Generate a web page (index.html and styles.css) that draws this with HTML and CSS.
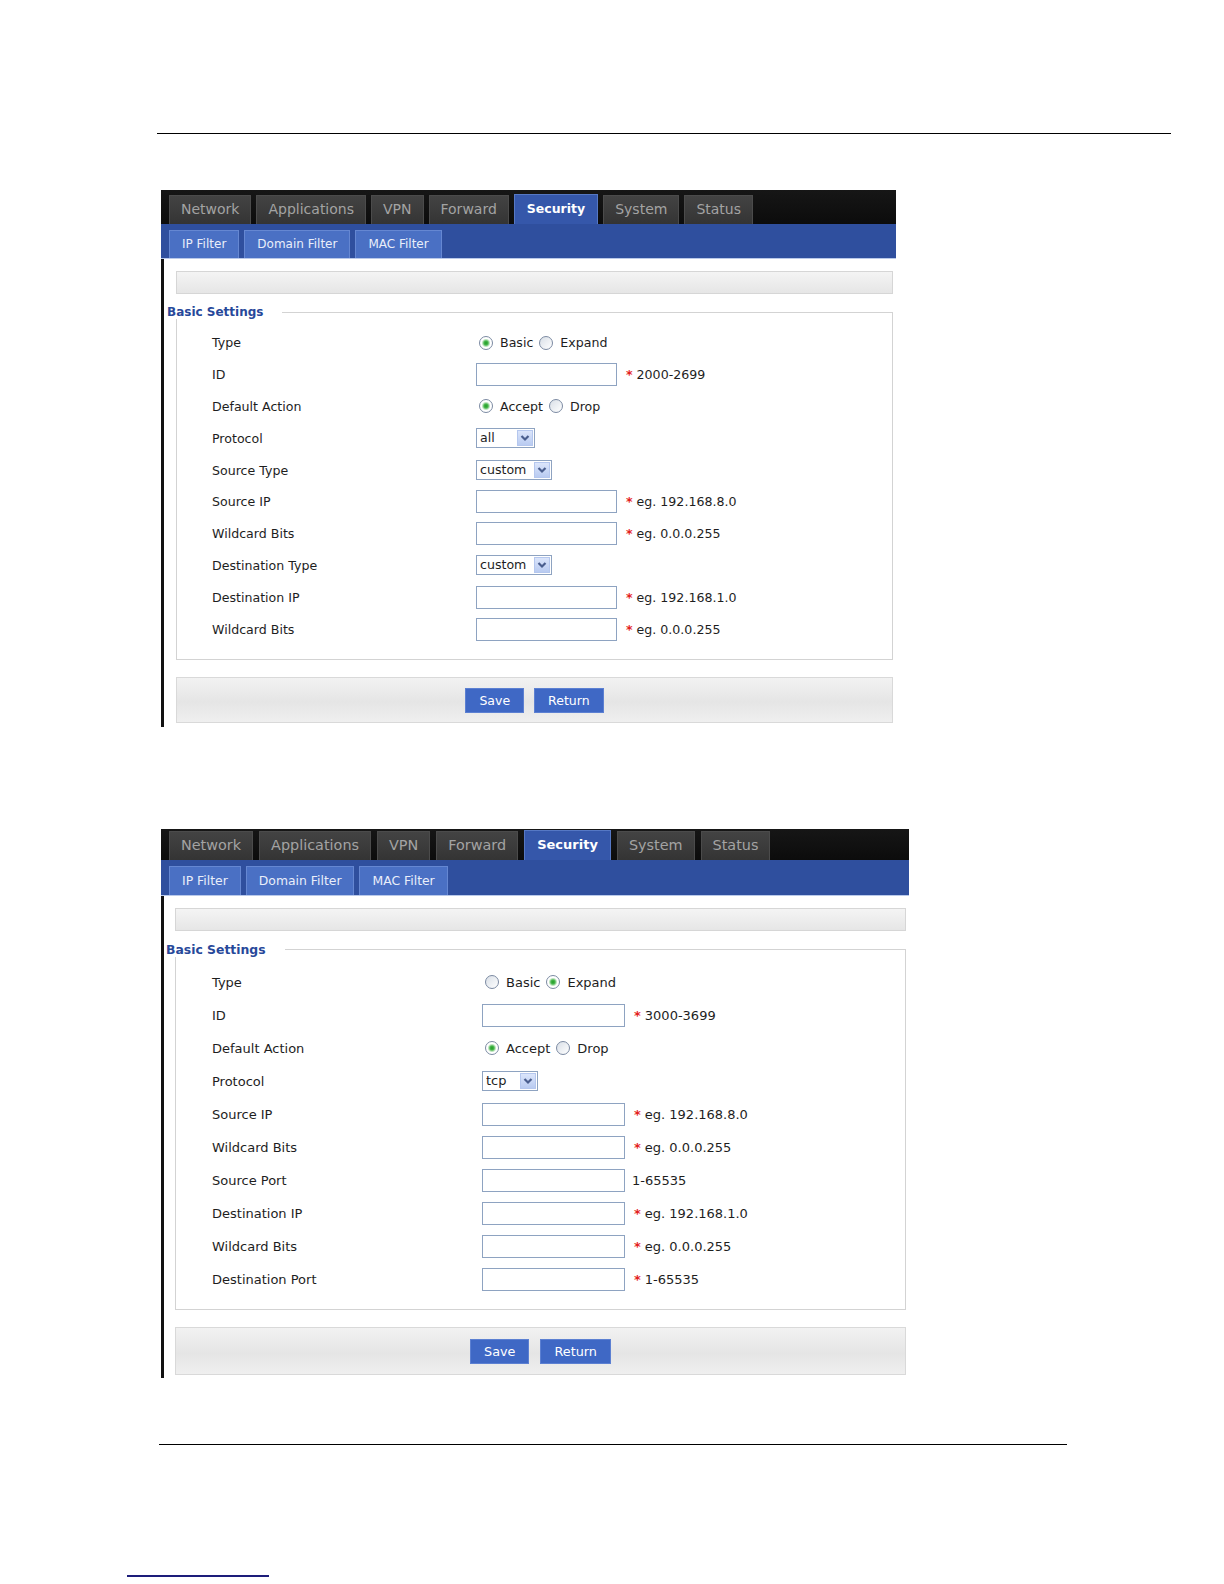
FILE: index.html
```html
<!DOCTYPE html>
<html lang="en">
<head>
<meta charset="UTF-8">
<meta name="viewport" content="width=device-width, initial-scale=1.0">
<title>Security - IP Filter</title>
<link rel="stylesheet" href="styles.css">
</head>
<body>
<div class="page">

  <div class="rule rule-top"></div>

  <!-- IP filter, basic type -->
  <div class="shot shot-basic">
    <div class="topnav">
      <a class="tab" href="#">Network</a>
      <a class="tab" href="#">Applications</a>
      <a class="tab" href="#">VPN</a>
      <a class="tab" href="#">Forward</a>
      <a class="tab active" href="#">Security</a>
      <a class="tab" href="#">System</a>
      <a class="tab" href="#">Status</a>
    </div>
    <div class="subnav">
      <a class="subtab" href="#">IP Filter</a>
      <a class="subtab" href="#">Domain Filter</a>
      <a class="subtab" href="#">MAC Filter</a>
    </div>
    <div class="content">
      <div class="infobar"></div>
      <fieldset class="settings">
        <legend>Basic Settings</legend>
        <div class="form-grid">
          <span class="label">Type</span>
          <span class="field">
            <label class="opt"><input type="radio" name="type1" checked>Basic</label>
            <label class="opt"><input type="radio" name="type1">Expand</label>
          </span>

          <span class="label">ID</span>
          <span class="field"><input class="text" type="text"><span class="req">*</span>2000-2699</span>

          <span class="label">Default Action</span>
          <span class="field">
            <label class="opt"><input type="radio" name="act1" checked>Accept</label>
            <label class="opt"><input type="radio" name="act1">Drop</label>
          </span>

          <span class="label">Protocol</span>
          <span class="field">
            <span class="select">
              <select class="sel-short"><option>all</option><option>tcp</option><option>udp</option><option>icmp</option></select>
              <span class="arrow"><svg width="16" height="16" viewBox="0 0 16 16"><path d="M4.5 6 L8 9.5 L11.5 6" fill="none" stroke="#4a5e8e" stroke-width="2.2"/></svg></span>
            </span>
          </span>

          <span class="label">Source Type</span>
          <span class="field">
            <span class="select">
              <select class="sel-long"><option>custom</option><option>any</option></select>
              <span class="arrow"><svg width="16" height="16" viewBox="0 0 16 16"><path d="M4.5 6 L8 9.5 L11.5 6" fill="none" stroke="#4a5e8e" stroke-width="2.2"/></svg></span>
            </span>
          </span>

          <span class="label">Source IP</span>
          <span class="field"><input class="text" type="text"><span class="req">*</span>eg. 192.168.8.0</span>

          <span class="label">Wildcard Bits</span>
          <span class="field"><input class="text" type="text"><span class="req">*</span>eg. 0.0.0.255</span>

          <span class="label">Destination Type</span>
          <span class="field">
            <span class="select">
              <select class="sel-long"><option>custom</option><option>any</option></select>
              <span class="arrow"><svg width="16" height="16" viewBox="0 0 16 16"><path d="M4.5 6 L8 9.5 L11.5 6" fill="none" stroke="#4a5e8e" stroke-width="2.2"/></svg></span>
            </span>
          </span>

          <span class="label">Destination IP</span>
          <span class="field"><input class="text" type="text"><span class="req">*</span>eg. 192.168.1.0</span>

          <span class="label">Wildcard Bits</span>
          <span class="field"><input class="text" type="text"><span class="req">*</span>eg. 0.0.0.255</span>
        </div>
      </fieldset>
      <div class="actions">
        <button class="btn" type="button">Save</button>
        <button class="btn" type="button">Return</button>
      </div>
    </div>
  </div>

  <!-- IP filter, expand type -->
  <div class="shot shot-expand">
    <div class="topnav">
      <a class="tab" href="#">Network</a>
      <a class="tab" href="#">Applications</a>
      <a class="tab" href="#">VPN</a>
      <a class="tab" href="#">Forward</a>
      <a class="tab active" href="#">Security</a>
      <a class="tab" href="#">System</a>
      <a class="tab" href="#">Status</a>
    </div>
    <div class="subnav">
      <a class="subtab" href="#">IP Filter</a>
      <a class="subtab" href="#">Domain Filter</a>
      <a class="subtab" href="#">MAC Filter</a>
    </div>
    <div class="content">
      <div class="infobar"></div>
      <fieldset class="settings">
        <legend>Basic Settings</legend>
        <div class="form-grid">
          <span class="label">Type</span>
          <span class="field">
            <label class="opt"><input type="radio" name="type2">Basic</label>
            <label class="opt"><input type="radio" name="type2" checked>Expand</label>
          </span>

          <span class="label">ID</span>
          <span class="field"><input class="text" type="text"><span class="req">*</span>3000-3699</span>

          <span class="label">Default Action</span>
          <span class="field">
            <label class="opt"><input type="radio" name="act2" checked>Accept</label>
            <label class="opt"><input type="radio" name="act2">Drop</label>
          </span>

          <span class="label">Protocol</span>
          <span class="field">
            <span class="select">
              <select class="sel-short"><option>tcp</option><option>udp</option><option>all</option></select>
              <span class="arrow"><svg width="16" height="16" viewBox="0 0 16 16"><path d="M4.5 6 L8 9.5 L11.5 6" fill="none" stroke="#4a5e8e" stroke-width="2.2"/></svg></span>
            </span>
          </span>

          <span class="label">Source IP</span>
          <span class="field"><input class="text" type="text"><span class="req">*</span>eg. 192.168.8.0</span>

          <span class="label">Wildcard Bits</span>
          <span class="field"><input class="text" type="text"><span class="req">*</span>eg. 0.0.0.255</span>

          <span class="label">Source Port</span>
          <span class="field"><input class="text" type="text"><span class="hint">1-65535</span></span>

          <span class="label">Destination IP</span>
          <span class="field"><input class="text" type="text"><span class="req">*</span>eg. 192.168.1.0</span>

          <span class="label">Wildcard Bits</span>
          <span class="field"><input class="text" type="text"><span class="req">*</span>eg. 0.0.0.255</span>

          <span class="label">Destination Port</span>
          <span class="field"><input class="text" type="text"><span class="req">*</span>1-65535</span>
        </div>
      </fieldset>
      <div class="actions">
        <button class="btn" type="button">Save</button>
        <button class="btn" type="button">Return</button>
      </div>
    </div>
  </div>

  <div class="rule rule-bottom"></div>
  <div class="footnote-line"></div>

</div>
</body>
</html>
```

FILE: styles.css
```css
* {
  box-sizing: border-box;
}

body {
  margin: 0;
  background: #fff;
  color: #1e1e1e;
  font-family: "DejaVu Sans", Verdana, sans-serif;
}

.page {
  width: 1224px;
  padding-top: 133px;
  padding-bottom: 8px;
}

.rule {
  border-top: 1px solid #000;
}

.rule-top {
  margin-left: 157px;
  width: 1014px;
}

.rule-bottom {
  margin: 66px 0 0 159px;
  width: 908px;
}

.footnote-line {
  margin: 130px 0 0 127px;
  width: 142px;
  border-top: 2px solid #1d1d7a;
}

.shot {
  margin-left: 161px;
}

.shot-basic {
  width: 735px;
  margin-top: 56px;
}

.shot-expand {
  width: 748px;
  margin-top: 102px;
}

/* main tabs */
.topnav {
  display: flex;
  align-items: flex-end;
  gap: 5px;
  height: 34px;
  padding-left: 8px;
  background: linear-gradient(#161616, #0c0c0c);
}

.tab {
  height: 29px;
  line-height: 27px;
  padding: 0 11px;
  border: 1px solid #4b4b4b;
  border-bottom: none;
  background: linear-gradient(#434343, #343434);
  color: #a3a3a3;
  font-size: 14px;
  text-decoration: none;
}

.tab.active {
  height: 30px;
  line-height: 28px;
  padding: 0 12px;
  border-color: #5678c4;
  background: #3557aa;
  color: #fff;
  font-weight: bold;
  font-size: 12.5px;
}

/* sub tabs */
.subnav {
  display: flex;
  align-items: flex-end;
  gap: 5px;
  height: 35px;
  padding-left: 8px;
  background: #2f4f9e;
  border-bottom: 1px solid #b9c9ea;
}

.subtab {
  height: 28px;
  line-height: 27px;
  padding: 0 12px;
  border: 1px solid #6587d2;
  border-bottom: none;
  background: #4a70c4;
  color: #e9eefa;
  font-size: 12px;
  text-decoration: none;
}

.content {
  border-left: 3px solid #111;
  padding: 12px 3px 4px 12px;
}

.infobar {
  height: 23px;
  border: 1px solid #d6d6d6;
  background: linear-gradient(#f4f4f4, #e6e6e6);
}

/* settings box */
.settings {
  margin: 11px 0 0;
  padding: 8px 0 14px;
  min-width: 0;
  border: 1px solid #d3d3d3;
}

.settings legend {
  margin-left: -10px;
  padding: 0 19px 0 0;
  line-height: 14px;
  font-size: 12px;
  font-weight: bold;
  color: #27489a;
  background: #fff;
}

.form-grid {
  display: grid;
  grid-template-columns: 264px auto;
  grid-auto-rows: 31.8px;
  align-items: center;
  padding-left: 35px;
  font-size: 12.6px;
}

.field {
  display: flex;
  align-items: center;
}

.opt {
  display: inline-flex;
  align-items: center;
  margin-right: 3px;
}

.opt input {
  appearance: none;
  width: 14px;
  height: 14px;
  margin: 0 7px 0 3px;
  border: 1px solid #7b8aa2;
  border-radius: 50%;
  background: linear-gradient(135deg, #d9dfe7, #fff);
}

.opt input:checked {
  background: radial-gradient(circle, #1f9d23 0, #46b54a 2px, #bfe5c0 3.5px, #fff 4.5px);
}

.text {
  width: 141px;
  height: 23px;
  padding: 2px 3px;
  border: 1px solid #8ea3c1;
  font: inherit;
}

.req {
  margin: 0 4px 0 9px;
  color: #e3211c;
  font-weight: bold;
}

.hint {
  margin-left: 7px;
}

.select {
  position: relative;
  display: inline-block;
}

.select select {
  appearance: none;
  height: 20px;
  padding: 0 0 0 3px;
  border: 1px solid #8ea3c1;
  border-radius: 0;
  background: #fff;
  color: #1e1e1e;
  font: inherit;
  line-height: 18px;
}

.sel-short {
  width: 59px;
}

.sel-long {
  width: 76px;
}

.select .arrow {
  position: absolute;
  top: 2px;
  right: 2px;
  width: 16px;
  height: 16px;
  border: 1px solid #b5c7ee;
  background: linear-gradient(#dbe5fb, #b9cbf1);
  pointer-events: none;
}

.select .arrow svg {
  display: block;
  margin: -1px 0 0 -1px;
}

/* buttons */
.actions {
  display: flex;
  justify-content: center;
  gap: 10px;
  margin-top: 17px;
  padding: 10px 0 9px;
  border: 1px solid #d9d9d9;
  background: linear-gradient(#f2f2f2, #e5e5e5 55%, #efefef);
}

.btn {
  height: 25px;
  padding: 0 13px;
  border: 1px solid #5c80d2;
  background: #3f68c5;
  color: #fff;
  font-family: "DejaVu Sans", Verdana, sans-serif;
  font-size: 12.5px;
}

/* second capture is a little larger */
.shot-expand .topnav {
  height: 31px;
  gap: 6px;
}

.shot-expand .tab {
  font-size: 14.4px;
}

.shot-expand .tab.active {
  font-size: 13px;
}

.shot-expand .subnav {
  height: 36px;
}

.shot-expand .subtab {
  height: 29px;
  line-height: 28px;
  font-size: 12.4px;
}

.shot-expand .content {
  padding: 12px 3px 3px 11px;
}

.shot-expand .settings {
  margin-top: 12px;
  padding: 9px 0 13px;
}

.shot-expand .settings legend {
  font-size: 12.4px;
}

.shot-expand .form-grid {
  grid-template-columns: 270px auto;
  grid-auto-rows: 33px;
  padding-left: 36px;
  font-size: 13px;
}

.shot-expand .text {
  width: 143px;
}

.shot-expand .sel-short {
  width: 56px;
}

.shot-expand .actions {
  gap: 11px;
  padding: 11px 0 10px;
}

.shot-expand .btn {
  font-size: 12.8px;
}
```
